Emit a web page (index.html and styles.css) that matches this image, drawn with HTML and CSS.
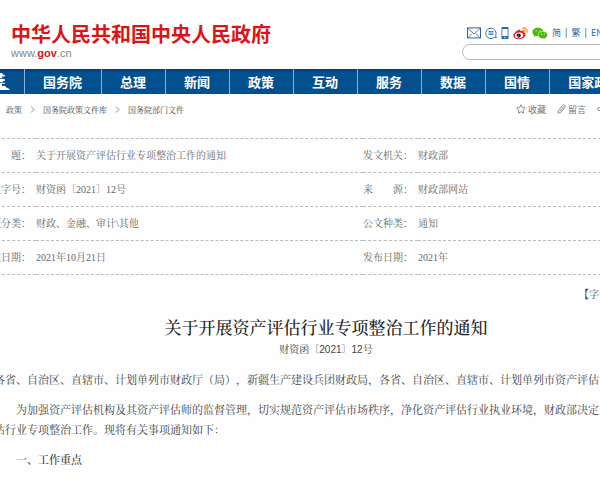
FILE: index.html
```html
<!DOCTYPE html>
<html lang="zh-CN">
<head>
<meta charset="utf-8">
<title>关于开展资产评估行业专项整治工作的通知</title>
<link rel="stylesheet" href="styles.css">
</head>
<body>
<header class="header">
  <div class="brand">
    <div class="brand-name">中华人民共和国中央人民政府</div>
    <a class="brand-url" href="#">www.<b>gov</b>.cn</a>
  </div>
  <div class="tools">
    <div class="tool-row">
      <a href="#" aria-label="邮箱"><svg width="14" height="12" viewBox="0 0 14 12" fill="none" stroke="#2467a8"><rect x=".5" y=".9" width="13" height="10"/><path d="M1 1.400 7 7l6-5.600M1 10.600 5 6.600M13 10.600 9 6.600" stroke-width=".8"/></svg></a>
      <a href="#" aria-label="互动"><svg width="12" height="12" viewBox="0 0 12 12" fill="none" stroke="#2467a8"><path d="M9.500 10.200A5.200 5.200 0 1 1 10.700 8.500L11.300 10.600Z" stroke-width=".9"/><path d="M3.500 4.500h5M3.500 6h5M3.500 7.500h5" stroke-width=".8"/></svg></a>
      <a href="#" aria-label="手机版"><svg width="8" height="12" viewBox="0 0 8 12"><rect x=".5" width="7" height="12" rx="1" fill="#2467a8"/><path d="M1.300 2h5.400v7H1.300z" fill="#fff"/><circle cx="4" cy="10.500" r=".7" fill="#fff"/></svg></a>
      <a href="#" aria-label="微博"><svg width="15" height="13" viewBox="0 0 15 13"><path d="M5.300 3C7 2.200 7.700 3 7.300 4.300c1.800-.8 3.700-.6 3.300 1 2 .6 2.600 2 1.500 3.700C10.700 11.300 8 12.500 5.500 12.300 2.500 12.200.3 10.700.4 8.500.5 6.700 3 3.900 5.300 3Z" fill="#dc1f21"/><ellipse cx="6" cy="8.400" rx="4.200" ry="2.900" fill="#fff" transform="rotate(-8 6 8.400)"/><circle cx="5.700" cy="8.600" r="2.100" fill="#171717"/><circle cx="5" cy="9.100" r=".7" fill="#fff"/><path d="M9.700 1.100c2.900-.7 5 1.600 4.100 4.300M10.100 3.200c1.300-.3 2.100.6 1.800 1.700" fill="none" stroke="#f18a28" stroke-width="1.200" stroke-linecap="round"/></svg></a>
      <a href="#" aria-label="微信"><svg width="16" height="13" viewBox="0 0 17 13"><path d="M6.300.4C2.900.4.5 2.400.5 5c0 1.500.8 2.700 2.100 3.500L2.100 10.200l2-1c.7.2 1.400.3 2.200.3 3.300 0 5.800-2 5.800-4.500S9.600.4 6.300.4Z" fill="#4db60b"/><path d="M11.500 4.200c-2.800 0-5 1.700-5 3.900s2.200 3.900 5 3.900c.6 0 1.200-.1 1.700-.2l1.700.8-.4-1.400c1.200-.7 2-1.800 2-3.100 0-2.200-2.200-3.900-5-3.900Z" fill="#4db60b" stroke="#fff" stroke-width=".6"/><g fill="#fff"><circle cx="4.400" cy="3.700" r=".7"/><circle cx="8" cy="3.700" r=".7"/><circle cx="10" cy="7.100" r=".6"/><circle cx="13" cy="7.100" r=".6"/></g></svg></a>
      <span class="langs"><a href="#">简</a><i>|</i><a href="#">繁</a><i>|</i><a href="#">EN</a></span>
    </div>
    <input class="search" type="search" aria-label="搜索">
  </div>
</header>

<nav class="nav">
  <a class="nav-home" href="#" aria-label="首页"><svg width="10" height="17" viewBox="0 0 10 17" fill="#fff"><path d="M0 0h2l1 1.500L5 2.500v1H2V5H0ZM0 5.700h3l2 .8v1.200L3 8v1H0ZM0 9.700h5v1H2V13H0ZM0 13h5l1 1.200 3.500 1.800v1H0Z"/></svg></a>
  <a href="#">国务院</a><a href="#">总理</a><a href="#">新闻</a><a href="#">政策</a><a href="#">互动</a><a href="#">服务</a><a href="#">数据</a><a href="#">国情</a><a href="#">国家政务服务平台</a>
</nav>

<div class="subbar">
  <div class="crumbs">
    <a href="#">政策</a>
    <svg width="5" height="7" viewBox="0 0 5 7"><path d="m1 .5 3 3-3 3"/></svg>
    <a href="#">国务院政策文件库</a>
    <svg width="5" height="7" viewBox="0 0 5 7"><path d="m1 .5 3 3-3 3"/></svg>
    <a href="#">国务院部门文件</a>
  </div>
  <div class="actions">
    <button type="button"><svg width="10" height="10" viewBox="0 0 10 10"><path d="m5 .7 1.300 2.800 3 .4-2.200 2.200.5 3.100L5 7.700 2.400 9.200l.5-3.100L.7 3.900l3-.4Z"/></svg>收藏</button>
    <button type="button"><svg width="9" height="10" viewBox="0 0 9 10"><path d="M5.500 1.300 6.500.6 8.200 1.900 8 3 3.700 8.500 1.200 9.300 1.300 6.700ZM6.700 2.500 2.900 7.400"/></svg>留言</button>
    <button type="button"><svg width="9" height="10" viewBox="0 0 9 10"><circle cx="2.200" cy="5" r="1.500"/><circle cx="7" cy="2" r="1.300"/><circle cx="7" cy="8" r="1.300"/><path d="m3.500 4.200 2.400-1.500M3.500 5.800l2.400 1.500"/></svg>分享</button>
  </div>
</div>

<table class="meta">
  <colgroup><col class="col-label"><col class="col-title"><col class="col-label"><col></colgroup>
  <tbody>
  <tr><th scope="row">标　　题：</th><td>关于开展资产评估行业专项整治工作的通知</td><th scope="row">发文机关：</th><td>财政部</td></tr>
  <tr><th scope="row">发文字号：</th><td>财资函〔2021〕12号</td><th scope="row">来　　源：</th><td>财政部网站</td></tr>
  <tr><th scope="row">主题分类：</th><td>财政、金融、审计\其他</td><th scope="row">公文种类：</th><td>通知</td></tr>
  <tr><th scope="row">成文日期：</th><td>2021年10月21日</td><th scope="row">发布日期：</th><td>2021年</td></tr>
  </tbody>
</table>

<div class="font-size"><b>【</b>字体：大 中 小<b>】</b></div>

<article class="article">
  <h1>关于开展资产评估行业专项整治工作的通知</h1>
  <p class="doc-no">财资函〔2021〕12号</p>
  <p>各省、自治区、直辖市、计划单列市财政厅（局），新疆生产建设兵团财政局，各省、自治区、直辖市、计划单列市资产评估协会：</p>
  <p class="indent">为加强资产评估机构及其资产评估师的监督管理，切实规范资产评估市场秩序，净化资产评估行业执业环境，财政部决定开展资产评估行业专项整治工作。现将有关事项通知如下：</p>
  <h2 class="indent">一、工作重点</h2>
</article>
</body>
</html>
```

FILE: styles.css
```css
* { box-sizing: border-box; }

body {
  margin: 0;
  overflow: hidden;
  background: #fefefe;
  color: #444;
  font-family: "Liberation Serif", "Noto Serif CJK SC", "Noto Sans CJK SC", serif;
  font-size: 10px;
  text-spacing-trim: space-all;
}

a { color: inherit; text-decoration: none; }

/* Header */
.header {
  display: flex;
  justify-content: space-between;
  align-items: flex-start;
  height: 69px;
  margin-right: -80px;
  padding: 24px 0 0 11px;
  font-family: "Liberation Sans", "Noto Sans CJK SC", sans-serif;
}
.brand-name {
  color: #dc1418;
  font-size: 20px;
  font-weight: 700;
  line-height: 22px;
  white-space: nowrap;
}
.brand-url {
  display: block;
  color: #888;
  font-size: 11px;
  line-height: 14px;
}
.brand-url b { color: #dc1418; }

.tools { width: 218px; }
.tool-row {
  display: flex;
  align-items: center;
  gap: 4px;
  height: 18px;
  padding-left: 5px;
}
.tool-row a { display: flex; }
.langs {
  display: flex;
  gap: 4px;
  color: #2467a8;
  font: 9px/14px "Noto Sans CJK SC", sans-serif;
}
.langs i { color: #333; font-style: normal; }
.search {
  display: block;
  width: 100%;
  height: 16px;
  margin-top: 2px;
  border: 1px solid #bbb;
  border-radius: 8px;
  background: #fff;
  outline: 0;
  appearance: none;
}

/* Main navigation */
.nav {
  display: flex;
  height: 25px;
  background: linear-gradient(#003c78, #03508f 4px);
  color: #fff;
  font: 700 13px/25px "Noto Sans CJK SC", sans-serif;
}
.nav a {
  flex: none;
  padding: 0 19px 0 18px;
  border-left: 1px solid #8fb0cf;
}
.nav .nav-home {
  display: flex;
  align-items: center;
  width: 24px;
  padding: 0;
  border: 0;
}

/* Breadcrumb and page actions */
.subbar {
  display: flex;
  justify-content: space-between;
  align-items: center;
  height: 30px;
  margin-right: -26px;
  color: #444;
  font-size: 8px;
}
.crumbs {
  display: flex;
  align-items: center;
  gap: 8px;
  padding-left: 6px;
}
.subbar svg { fill: none; stroke: #777; stroke-width: 0.8; }
.actions { display: flex; gap: 11px; }
.actions button {
  display: flex;
  align-items: center;
  gap: 2px;
  padding: 0;
  border: 0;
  background: none;
  color: #777;
  font: 9px "Noto Sans CJK SC", sans-serif;
}

/* Document details */
.meta {
  width: calc(100% + 60px);
  margin: 14px 0 0 -19px;
  border-collapse: collapse;
  table-layout: fixed;
  border-top: 1px dashed #bbb;
  color: #666;
}
.meta tr { border-bottom: 1px dashed #bbb; }
.meta th,
.meta td {
  height: 34px;
  padding: 0 0 2px;
  font-weight: 400;
  text-align: left;
  white-space: nowrap;
}
.col-label { width: 55px; }
.col-title { width: 327px; }

.font-size {
  margin: 12px -64px 0 0;
  text-align: right;
  line-height: 16px;
}

/* Article */
.article {
  margin: 14px -62px 0 -6px;
  font-size: 11px;
  line-height: 20px;
}
.article p { margin: 0 0 10px; }
.article h1 {
  margin: 0 4px 0 0;
  color: #222;
  font-size: 17px;
  font-weight: 500;
  line-height: 24px;
  text-align: center;
}
.article .doc-no {
  margin: 0 4px 11px 0;
  font-family: "Liberation Sans", "Noto Serif CJK SC", sans-serif;
  font-size: 10px;
  line-height: 18px;
  text-align: center;
}
.article .indent { text-indent: 2em; }
.article h2 {
  margin: 0;
  color: #333;
  font-size: 11px;
  font-weight: 500;
}
```
